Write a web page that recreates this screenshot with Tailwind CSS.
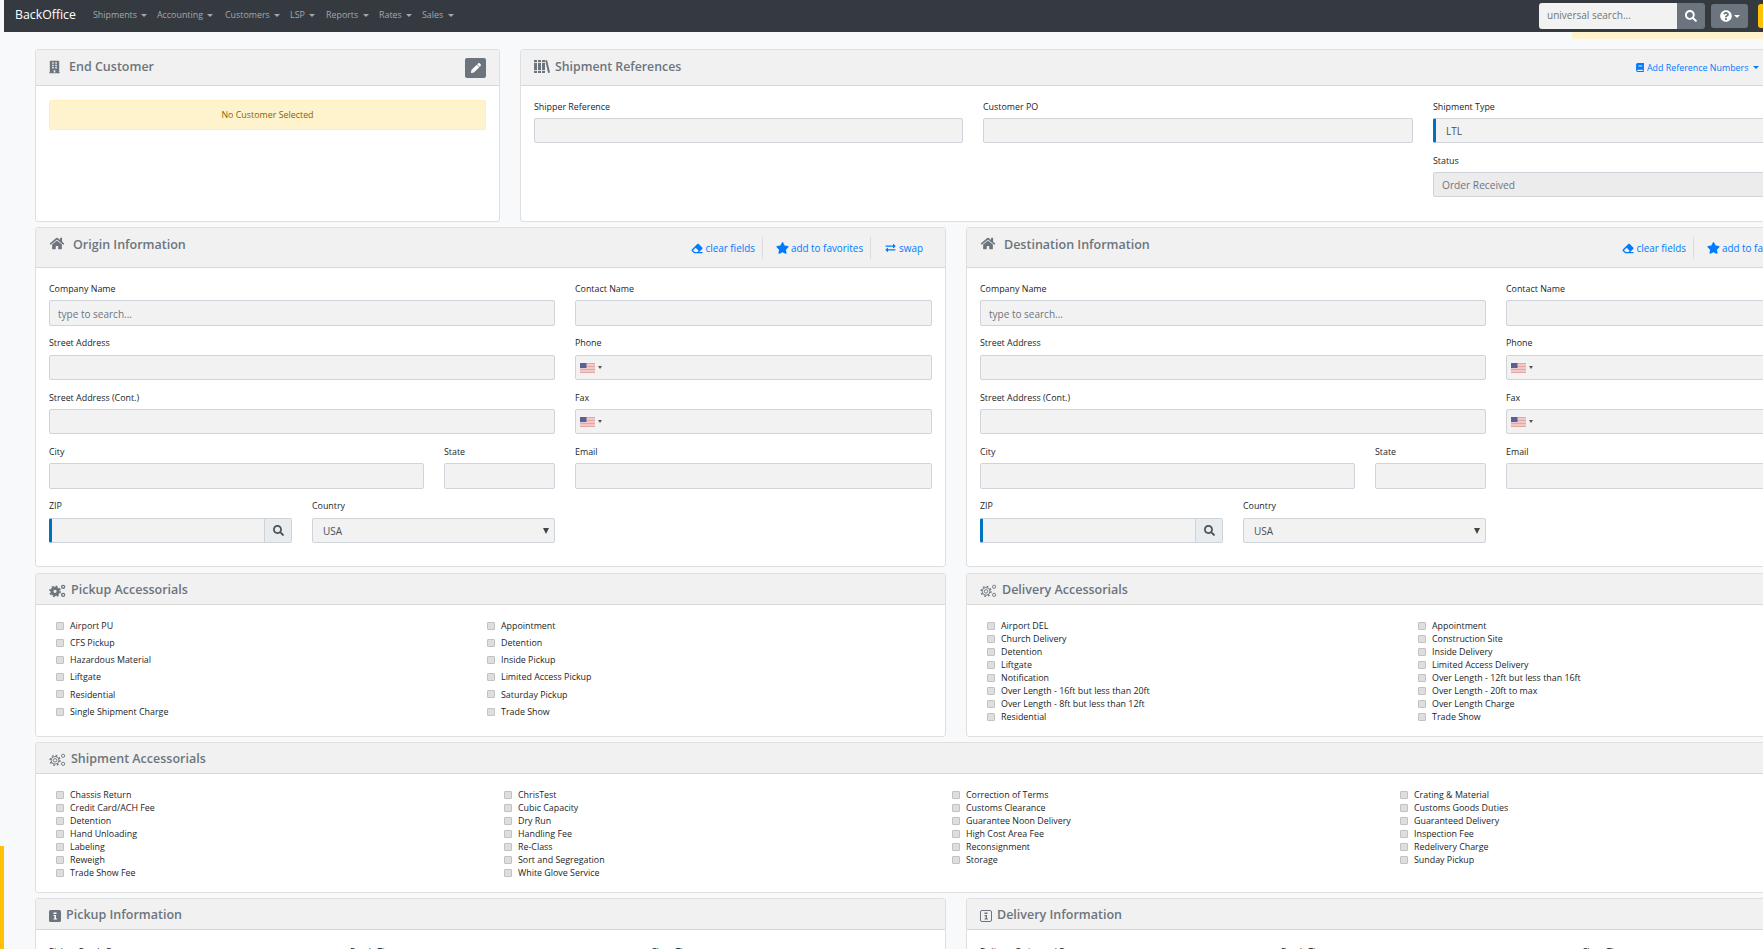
<!DOCTYPE html>
<html lang="en">
<head>
    <meta charset="UTF-8">
    <title>BackOffice</title>
    <script src="https://cdn.jsdelivr.net/npm/@tailwindcss/browser@4"></script>
</head>
<body class="bg-[#f8f9fa] font-['Open_Sans',sans-serif] text-[#212529] overflow-hidden">
<div class="relative w-[1763px] h-[949px] overflow-hidden">
    <!-- left edge marker -->
    <div class="absolute left-0 top-[846px] w-[4px] h-[103px] bg-[#ffc107]"></div>
    <!-- alert peeking out from under the navbar -->
    <div class="absolute left-[1572px] top-[32px] w-[191px] h-[7px] bg-[#fff3cd] rounded-bl-[3px]"></div>

    <nav class="ml-[4px] h-[32px] bg-[#343a40] flex items-center pl-[11px]">
        <span class="text-white text-[12.3px] w-[62px] mr-[16px] mt-[-1px] whitespace-nowrap">BackOffice</span>
        <ul class="flex text-[8.9px] text-[#a3a8ad] mt-[-2px]">
            <li class="w-[64px]">Shipments <i class="inline-block align-middle ml-[2px] border-x-[3px] border-x-transparent border-t-[3px] border-t-[#a3a8ad]"></i></li>
            <li class="w-[68px]">Accounting <i class="inline-block align-middle ml-[2px] border-x-[3px] border-x-transparent border-t-[3px] border-t-[#a3a8ad]"></i></li>
            <li class="w-[65px]">Customers <i class="inline-block align-middle ml-[2px] border-x-[3px] border-x-transparent border-t-[3px] border-t-[#a3a8ad]"></i></li>
            <li class="w-[36px]">LSP <i class="inline-block align-middle ml-[2px] border-x-[3px] border-x-transparent border-t-[3px] border-t-[#a3a8ad]"></i></li>
            <li class="w-[53px]">Reports <i class="inline-block align-middle ml-[2px] border-x-[3px] border-x-transparent border-t-[3px] border-t-[#a3a8ad]"></i></li>
            <li class="w-[43px]">Rates <i class="inline-block align-middle ml-[2px] border-x-[3px] border-x-transparent border-t-[3px] border-t-[#a3a8ad]"></i></li>
            <li>Sales <i class="inline-block align-middle ml-[2px] border-x-[3px] border-x-transparent border-t-[3px] border-t-[#a3a8ad]"></i></li>
        </ul>
        <div class="ml-auto flex items-center">
            <div class="w-[138px] h-[26px] bg-[#f2f2f2] rounded-l-[3px] flex items-center pl-[8px] pb-[1px] text-[10px] text-[#6c757d]">universal search...</div>
            <div class="w-[28px] h-[26px] bg-[#6c757d] rounded-r-[3px] flex items-center justify-center">
                <svg class="w-[12px] h-[12px]" viewBox="0 0 512 512" fill="white"><path d="M505 442.700L405.300 343c-4.500-4.500-10.600-7-17-7H372c27.600-35.300 44-79.700 44-128C416 93.100 322.900 0 208 0S0 93.100 0 208s93.100 208 208 208c48.300 0 92.700-16.400 128-44v16.300c0 6.400 2.500 12.500 7 17l99.700 99.700c9.400 9.400 24.600 9.400 33.900 0l28.300-28.300c9.400-9.400 9.400-24.600.1-34zM208 336c-70.700 0-128-57.200-128-128 0-70.700 57.200-128 128-128 70.700 0 128 57.200 128 128 0 70.700-57.200 128-128 128z"/></svg>
            </div>
            <div class="ml-[6px] w-[37px] h-[24px] bg-[#6c757d] rounded-[3px] flex items-center justify-center gap-[2px]">
                <svg class="w-[12px] h-[12px]" viewBox="0 0 512 512" fill="white"><path d="M504 256c0 137-111 248-248 248S8 393 8 256 119 8 256 8s248 111 248 248zM262.700 90c-54.500 0-89.300 23-116.500 63.800-3.500 5.300-2.400 12.400 2.700 16.300l34.700 26.300c5.200 3.900 12.600 3 16.700-2.100 17.900-22.700 30.100-35.800 57.300-35.800 20.400 0 45.700 13.100 45.700 33 0 15-12.400 22.700-32.600 34C247.100 238.500 216 254.900 216 296v4c0 6.600 5.400 12 12 12h56c6.600 0 12-5.400 12-12v-1.300c0-28.500 83.200-29.700 83.200-106.700 0-58-60.200-102-116.500-102zM256 338c-25.400 0-46 20.600-46 46 0 25.400 20.600 46 46 46s46-20.600 46-46c0-25.400-20.600-46-46-46z"/></svg>
                <i class="border-x-[3px] border-x-transparent border-t-[3px] border-t-white"></i>
            </div>
            <div class="ml-[10px] w-[5px] h-[24px] bg-[#ffc107] rounded-l-[3px]"></div>
        </div>
    </nav>

    <main class="w-[1842px] ml-[35px] mt-[17px] flex flex-col gap-[5px]">
        <!-- first row -->
        <div class="flex gap-[20px]">
            <section class="w-[465px] h-[173px] bg-white border border-[#dfdfdf] rounded-[3px]">
                <header class="h-[36px] bg-[#f1f1f1] border-b border-[#d8d8d8] flex items-center pl-[13px] pr-[13px] text-[#6c757d] rounded-t-[3px]">
                    <svg class="w-[11px] h-[14px] mr-[9px] mt-[-2px]" viewBox="0 0 448 512" fill="#6c757d"><path d="M436 480h-20V24c0-13.300-10.700-24-24-24H56C42.700 0 32 10.700 32 24v456H12c-6.600 0-12 5.400-12 12v20h448v-20c0-6.600-5.400-12-12-12zM128 76c0-6.600 5.400-12 12-12h40c6.600 0 12 5.400 12 12v40c0 6.600-5.400 12-12 12h-40c-6.600 0-12-5.400-12-12V76zm0 96c0-6.600 5.400-12 12-12h40c6.600 0 12 5.400 12 12v40c0 6.600-5.400 12-12 12h-40c-6.600 0-12-5.400-12-12v-40zm52 148h-40c-6.600 0-12-5.400-12-12v-40c0-6.600 5.400-12 12-12h40c6.600 0 12 5.400 12 12v40c0 6.600-5.400 12-12 12zm76 160h-64v-84c0-6.600 5.400-12 12-12h40c6.600 0 12 5.400 12 12v84zm64-172c0 6.600-5.400 12-12 12h-40c-6.600 0-12-5.400-12-12v-40c0-6.600 5.400-12 12-12h40c6.600 0 12 5.400 12 12v40zm0-96c0 6.600-5.400 12-12 12h-40c-6.600 0-12-5.400-12-12v-40c0-6.600 5.400-12 12-12h40c6.600 0 12 5.400 12 12v40zm0-96c0 6.600-5.400 12-12 12h-40c-6.600 0-12-5.400-12-12V76c0-6.600 5.400-12 12-12h40c6.600 0 12 5.400 12 12v40z"/></svg>
                    <h2 class="text-[12.5px] font-semibold">End Customer</h2>
                    <div class="ml-auto w-[21px] h-[20px] bg-[#6c757d] rounded-[2px] flex items-center justify-center">
                        <svg class="w-[10px] h-[10px]" viewBox="0 0 512 512" fill="white"><path d="M497.900 142.100l-46.100 46.100c-4.700 4.700-12.300 4.700-17 0l-111-111c-4.700-4.700-4.700-12.300 0-17l46.100-46.100c18.700-18.700 49.100-18.700 67.900 0l60.100 60.100c18.800 18.700 18.800 49.100 0 67.900zM284.200 99.800L21.600 362.400.4 483.900c-2.900 16.400 11.400 30.600 27.800 27.800l121.500-21.300 262.600-262.600c4.700-4.700 4.700-12.300 0-17l-111-111c-4.800-4.700-12.400-4.700-17.100 0z"/></svg>
                    </div>
                </header>
                <div class="px-[13px] pt-[14px]">
                    <div class="h-[30px] bg-[#fff3cd] border border-[#ffeeba] rounded-[2px] flex items-center justify-center text-[8.9px] text-[#856404]">No Customer Selected</div>
                </div>
            </section>
            <section class="flex-1 h-[173px] bg-white border border-[#dfdfdf] rounded-[3px]">
                <header class="h-[36px] bg-[#f1f1f1] border-b border-[#d8d8d8] flex items-center pl-[13px] text-[#6c757d] rounded-t-[3px]">
                    <svg class="w-[16px] h-[13px] mr-[5px] mt-[-2px]" viewBox="0 0 16 13" fill="#6c757d"><path d="M0 0h3v13H0zM4 0h3v13H4zM8 0h3v13H8zM11.200.6l1.900-.5L16 12.500l-1.900.5z"/><path d="M0 2.500h11M0 10.500h11" stroke="#f1f1f1" stroke-width=".8"/></svg>
                    <h2 class="text-[12.3px] font-semibold">Shipment References</h2>
                    <div class="absolute left-[1636px] top-[61px] flex items-center whitespace-nowrap text-[8.9px] text-[#007bff]">
                        <svg class="w-[8px] h-[9px] mr-[3px]" viewBox="0 0 448 512" fill="#007bff"><path d="M448 360V24c0-13.300-10.700-24-24-24H96C43 0 0 43 0 96v320c0 53 43 96 96 96h328c13.300 0 24-10.700 24-24v-16c0-7.500-3.500-14.300-8.900-18.700-4.200-15.400-4.200-59.300 0-74.700 5.400-4.300 8.900-11.100 8.900-18.600zM128 134c0-3.300 2.700-6 6-6h212c3.300 0 6 2.700 6 6v20c0 3.300-2.700 6-6 6H134c-3.300 0-6-2.700-6-6v-20zm0 64c0-3.300 2.700-6 6-6h212c3.300 0 6 2.700 6 6v20c0 3.300-2.700 6-6 6H134c-3.300 0-6-2.700-6-6v-20zm253.400 250H96c-17.700 0-32-14.300-32-32 0-17.600 14.400-32 32-32h285.400c-1.900 17.100-1.900 46.900 0 64z"/></svg>
                        Add Reference Numbers
                        <i class="ml-[5px] border-x-[3px] border-x-transparent border-t-[3px] border-t-[#007bff]"></i>
                    </div>
                </header>
                <div class="grid grid-cols-[429px_430px_429px] gap-x-[20px] pl-[13px] pt-[12px] text-[8.9px]">
                    <div>
                        <label class="block h-[20px] pt-[2px]">Shipper Reference</label>
                        <div class="h-[25px] bg-[#f2f2f2] border border-[#ced4da] rounded-[2px]"></div>
                    </div>
                    <div>
                        <label class="block h-[20px] pt-[2px]">Customer PO</label>
                        <div class="h-[25px] bg-[#f2f2f2] border border-[#ced4da] rounded-[2px]"></div>
                    </div>
                    <div class="row-span-2">
                        <label class="block h-[20px] pt-[2px]">Shipment Type</label>
                        <div class="h-[25px] bg-[#f2f2f2] border border-[#ced4da] border-l-[3px] border-l-[#0071bc] rounded-[2px] pl-[10px] pt-[1px] flex items-center text-[10px] text-[#495057]">LTL</div>
                        <label class="block h-[20px] mt-[9px] pt-[2px]">Status</label>
                        <div class="h-[25px] bg-[#ececec] border border-[#ced4da] rounded-[2px] pl-[8px] pt-[2px] flex items-center text-[10.2px] text-[#6c757d]">Order Received</div>
                    </div>
                </div>
            </section>
        </div>
        <div id="rest"></div>
    </main>
</div>
<script>
    // the two address cards and the accessorial lists repeat, so they come from data; classes are written out in full
    const homeIcon = '<svg class="w-[16px] h-[13px] mt-[9px] mr-[8px]" viewBox="0 0 576 512" fill="#6c757d"><path d="M280.400 148.300L96 300.100V464a16 16 0 0 0 16 16l112.100-.3a16 16 0 0 0 15.900-16V368a16 16 0 0 1 16-16h64a16 16 0 0 1 16 16v95.600a16 16 0 0 0 16 16.100L464 480a16 16 0 0 0 16-16V300L295.700 148.300a12.200 12.200 0 0 0-15.300 0zM571.600 251.500L488 182.600V44.100a12 12 0 0 0-12-12h-56a12 12 0 0 0-12 12v72.600L318.500 43a48 48 0 0 0-61 0L4.300 251.500a12 12 0 0 0-1.600 16.900l25.500 31A12 12 0 0 0 45.200 301l235.200-193.700a12.200 12.200 0 0 1 15.300 0L530.900 301a12 12 0 0 0 16.900-1.600l25.500-31a12 12 0 0 0-1.700-16.900z"/></svg>';
    const searchIcon = '<svg class="w-[11px] h-[11px]" viewBox="0 0 512 512" fill="#495057"><path d="M505 442.700L405.300 343c-4.500-4.500-10.600-7-17-7H372c27.600-35.300 44-79.700 44-128C416 93.100 322.900 0 208 0S0 93.100 0 208s93.100 208 208 208c48.300 0 92.700-16.400 128-44v16.300c0 6.400 2.500 12.500 7 17l99.700 99.700c9.400 9.400 24.600 9.400 33.900 0l28.300-28.300c9.400-9.400 9.400-24.600.1-34zM208 336c-70.700 0-128-57.200-128-128 0-70.700 57.200-128 128-128 70.700 0 128 57.200 128 128 0 70.700-57.200 128-128 128z"/></svg>';
    const flag = '<svg class="w-[15px] h-[10px]" viewBox="0 0 15 10"><rect width="15" height="10" fill="#e8a5a5"/><path d="M0 2h15M0 5h15M0 8h15" stroke="#f3eeee"/><rect width="6.500" height="5" fill="#5a5f96"/></svg><i class="border-x-[2px] border-x-transparent border-t-[3px] border-t-[#555]"></i>';
    const cogsFilled = '<svg class="w-[17px] h-[14px]" viewBox="0 0 24 20" fill="none" stroke="#6c757d"><circle cx="8.500" cy="10.500" r="4.500" stroke-width="4.500"/><circle cx="8.500" cy="10.500" r="7.300" stroke-width="2.200" stroke-dasharray="2.800 2.930"/><circle cx="20" cy="4" r="2.200" stroke-width="1.800"/><circle cx="20" cy="15.500" r="2.200" stroke-width="1.800"/></svg>';
    const cogsLine = '<svg class="w-[17px] h-[14px]" viewBox="0 0 24 20" fill="none" stroke="#6c757d" stroke-width="1.300"><circle cx="8.500" cy="10.500" r="2.500"/><circle cx="8.500" cy="10.500" r="5.500"/><circle cx="8.500" cy="10.500" r="7" stroke-width="2" stroke-dasharray="2.500 3"/><circle cx="20" cy="4" r="2.300"/><circle cx="20" cy="15.500" r="2.300"/></svg>';
    const infoFilled = '<svg class="w-[12px] h-[12px]" viewBox="0 0 12 12"><rect width="12" height="12" rx="1.500" fill="#6c757d"/><path d="M4.500 2.500h3V4h-3zM4.500 5h2.500v3.500h1v1H4.500v-1h1V6h-1z" fill="#fff"/></svg>';
    const infoLine = '<svg class="w-[12px] h-[12px]" viewBox="0 0 12 12"><rect x=".5" y=".5" width="11" height="11" rx="1.500" fill="none" stroke="#6c757d"/><path d="M4.500 2.500h3V4h-3zM4.500 5h2.500v3.500h1v1H4.500v-1h1V6h-1z" fill="#6c757d"/></svg>';

    const card = 'bg-white border border-[#dfdfdf] rounded-[3px]';
    const field = 'bg-[#f2f2f2] border border-[#ced4da] rounded-[2px]';

    function addressCard(title) {
        return `<section class="w-[911px] h-[340px] ${card}">
          <header class="h-[40px] bg-[#f1f1f1] border-b border-[#d8d8d8] flex pl-[13px] text-[#6c757d] rounded-t-[3px]">
            ${homeIcon}
            <h2 class="text-[12.5px] font-semibold mt-[8px]">${title}</h2>
            <div class="ml-auto mr-[22px] flex items-center h-[22px] mt-[9px] text-[9.9px] text-[#007bff] whitespace-nowrap">
              <svg class="w-[12px] h-[11px] mr-[2px]" viewBox="0 0 512 512" fill="#007bff"><path d="M497.900 273.900c18.700-18.700 18.700-49.100 0-67.900l-160-160c-18.700-18.700-49.100-18.700-67.900 0l-256 256c-18.700 18.700-18.700 49.100 0 67.900l96 96A48 48 0 0 0 144 480h356c6.600 0 12-5.400 12-12v-40c0-6.600-5.400-12-12-12H355.900l142-142.100zM195.900 218.700l137.400 137.400L275.900 416H149l-80-80 126.900-117.300z"/></svg>
              clear fields
              <span class="w-px h-[22px] bg-[#dcdcdc] ml-[7px] mr-[13px]"></span>
              <svg class="w-[13px] h-[12px] mr-[2px]" viewBox="0 0 576 512" fill="#007bff"><path d="M259.300 17.800L194 150.200 47.900 171.500c-26.200 3.800-36.700 36.100-17.700 54.600l105.700 103-25 145.500c-4.500 26.300 23.200 46 46.400 33.700L288 439.600l130.700 68.700c23.200 12.200 50.900-7.400 46.400-33.700l-25-145.500 105.700-103c19-18.500 8.500-50.800-17.700-54.600L382 150.200 316.700 17.800c-11.700-23.600-45.600-23.900-57.400 0z"/></svg>
              add to favorites
              <span class="w-px h-[22px] bg-[#dcdcdc] ml-[7px] mr-[14px]"></span>
              <svg class="w-[11px] h-[10px] mr-[3px]" viewBox="0 0 512 512" fill="#007bff"><path d="M0 168v-16c0-13.300 10.700-24 24-24h360V80c0-21.400 25.900-32 41-17l80 80c9.400 9.400 9.400 24.600 0 33.900l-80 80C410 272 384 261.500 384 240v-48H24c-13.300 0-24-10.700-24-24zm488 152H128v-48c0-21.300-25.900-32.100-41-17l-80 80c-9.400 9.400-9.400 24.600 0 33.900l80 80C102 464 128 453.400 128 432v-48h360c13.300 0 24-10.700 24-24v-16c0-13.300-10.700-24-24-24z"/></svg>
              swap
            </div>
          </header>
          <div class="grid grid-cols-[506px_357px] gap-x-[20px] pl-[13px] pt-[13px] text-[8.9px]">
            <div class="flex flex-col">
              <label class="h-[19px] pt-[1px]">Company Name</label>
              <div class="h-[26px] ${field} pl-[8px] pt-[2px] flex items-center text-[10px] text-[#6c757d]">type to search...</div>
              <label class="h-[19px] mt-[10px]">Street Address</label>
              <div class="h-[25px] ${field}"></div>
              <label class="h-[18px] mt-[11px]">Street Address (Cont.)</label>
              <div class="h-[25px] ${field}"></div>
              <div class="flex gap-[20px] mt-[10px]">
                <div class="w-[375px]"><label class="block h-[19px] pt-[1px]">City</label><div class="h-[26px] ${field}"></div></div>
                <div class="w-[111px]"><label class="block h-[19px] pt-[1px]">State</label><div class="h-[26px] ${field}"></div></div>
              </div>
              <div class="flex gap-[20px] mt-[10px]">
                <div class="w-[243px]">
                  <label class="block h-[19px]">ZIP</label>
                  <div class="h-[25px] flex border border-[#ced4da] border-l-[3px] border-l-[#0071bc] rounded-[2px]">
                    <div class="flex-1 bg-[#f2f2f2]"></div>
                    <div class="w-[27px] bg-[#e9ecef] border-l border-[#ced4da] flex items-center justify-center">${searchIcon}</div>
                  </div>
                </div>
                <div class="w-[243px]">
                  <label class="block h-[19px]">Country</label>
                  <div class="h-[25px] ${field} pl-[10px] pr-[5px] flex items-center justify-between text-[10px] text-[#495057]"><span class="pt-[1px]">USA</span><i class="border-x-[3px] border-x-transparent border-t-[6px] border-t-[#444]"></i></div>
                </div>
              </div>
            </div>
            <div class="flex flex-col">
              <label class="h-[19px] pt-[1px]">Contact Name</label>
              <div class="h-[26px] ${field}"></div>
              <label class="h-[19px] mt-[10px]">Phone</label>
              <div class="h-[25px] ${field} pl-[4px] flex items-center gap-[3px]">${flag}</div>
              <label class="h-[18px] mt-[11px]">Fax</label>
              <div class="h-[25px] ${field} pl-[4px] flex items-center gap-[3px]">${flag}</div>
              <label class="h-[19px] mt-[10px] pt-[1px]">Email</label>
              <div class="h-[26px] ${field}"></div>
            </div>
          </div>
        </section>`;
    }
    function rows(items, rowClass) {
        return items.map(t => `<div class="${rowClass} flex items-center text-[8.9px] whitespace-nowrap"><span class="w-[8px] h-[8px] bg-[#dedede] border border-[#c2c2c2] rounded-[1px] mr-[6px] shrink-0"></span>${t}</div>`).join('');
    }
    function head(icon, title) {
        return `<header class="h-[31px] bg-[#f1f1f1] border-b border-[#d8d8d8] flex items-center gap-[5px] pl-[13px] pt-[3px] text-[#6c757d] rounded-t-[3px]">${icon}<h2 class="text-[12.5px] font-semibold">${title}</h2></header>`;
    }
    const tall = 'h-[17.200px]', short = 'h-[13px]';

    document.getElementById('rest').innerHTML = `
    <div class="flex flex-col gap-[5px]">
      <div class="flex gap-[20px]">${addressCard('Origin Information')}${addressCard('Destination Information')}</div>
      <div class="flex gap-[20px] mt-[1px]">
        <section class="w-[911px] h-[164px] ${card}">
          ${head(cogsFilled, 'Pickup Accessorials')}
          <div class="grid grid-cols-[431px_431px] pl-[20px] pt-[12px]">
            <div>${rows(['Airport PU','CFS Pickup','Hazardous Material','Liftgate','Residential','Single Shipment Charge'], tall)}</div>
            <div>${rows(['Appointment','Detention','Inside Pickup','Limited Access Pickup','Saturday Pickup','Trade Show'], tall)}</div>
          </div>
        </section>
        <section class="w-[911px] h-[164px] ${card}">
          ${head(cogsLine, 'Delivery Accessorials')}
          <div class="grid grid-cols-[431px_431px] pl-[20px] pt-[14px]">
            <div>${rows(['Airport DEL','Church Delivery','Detention','Liftgate','Notification','Over Length - 16ft but less than 20ft','Over Length - 8ft but less than 12ft','Residential'], short)}</div>
            <div>${rows(['Appointment','Construction Site','Inside Delivery','Limited Access Delivery','Over Length - 12ft but less than 16ft','Over Length - 20ft to max','Over Length Charge','Trade Show'], short)}</div>
          </div>
        </section>
      </div>
      <section class="h-[151px] ${card}">
        ${head(cogsLine, 'Shipment Accessorials')}
        <div class="grid grid-cols-[448px_448px_448px_448px] pl-[20px] pt-[14px]">
          <div>${rows(['Chassis Return','Credit Card/ACH Fee','Detention','Hand Unloading','Labeling','Reweigh','Trade Show Fee'], short)}</div>
          <div>${rows(['ChrisTest','Cubic Capacity','Dry Run','Handling Fee','Re-Class','Sort and Segregation','White Glove Service'], short)}</div>
          <div>${rows(['Correction of Terms','Customs Clearance','Guarantee Noon Delivery','High Cost Area Fee','Reconsignment','Storage'], short)}</div>
          <div>${rows(['Crating &amp; Material','Customs Goods Duties','Guaranteed Delivery','Inspection Fee','Redelivery Charge','Sunday Pickup'], short)}</div>
        </div>
      </section>
      <div class="flex gap-[20px]">
        <section class="w-[911px] h-[80px] ${card}">
          ${head(infoFilled, 'Pickup Information')}
          <div class="grid grid-cols-[301px_301px_1fr] pl-[13px] pt-[15px] text-[8.9px]"><span>Pickup Ready Date</span><span>Ready Time</span><span>Close Time</span></div>
        </section>
        <section class="w-[911px] h-[80px] ${card}">
          ${head(infoLine, 'Delivery Information')}
          <div class="grid grid-cols-[301px_301px_1fr] pl-[13px] pt-[15px] text-[8.9px]"><span>Delivery Estimated Date</span><span>Ready Time</span><span>Close Time</span></div>
        </section>
      </div>
    </div>`;
</script>
</body>
</html>
